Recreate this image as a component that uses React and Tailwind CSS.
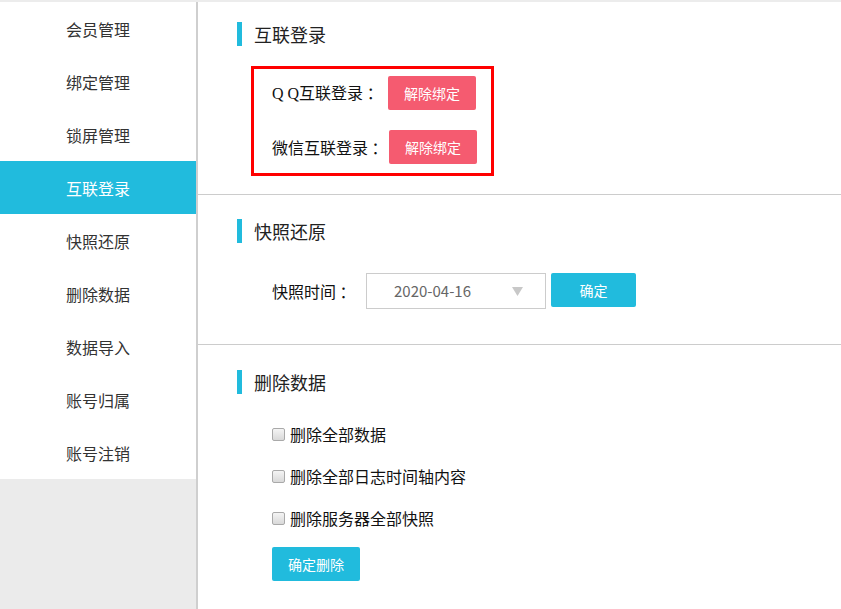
import React from 'react'

const menu = ['会员管理', '绑定管理', '锁屏管理', '互联登录', '快照还原', '删除数据', '数据导入', '账号归属', '账号注销']
const cjk = { fontFamily: '"Noto Sans CJK SC", "Noto Sans", sans-serif' }

function Title({ text }) {
  return (
    <div className="flex items-center h-[24px] ml-[39px]">
      <span className="w-[5px] h-[24px] bg-[#21bbdd]" />
      <span className="ml-[12px] text-[18px] leading-none text-[#222]">{text}</span>
    </div>
  )
}

function Checkbox({ label }) {
  return (
    <label className="flex items-center h-[42px]">
      <span className="w-[13px] h-[13px] rounded-[2px] border border-[#a9a9a9] bg-gradient-to-b from-[#f4f4f4] to-[#d9d9d9]" />
      <span className="ml-[5px] text-[16px] leading-none text-[#111]">{label}</span>
    </label>
  )
}

export default function App() {
  return (
    <div className="w-[841px] h-[609px] flex bg-white border-t-2 border-[#ececec] overflow-hidden" style={cjk}>
      {/* Sidebar */}
      <div className="w-[198px] shrink-0 flex flex-col bg-[#ebebeb] border-r-2 border-[#cfcfcf]">
        <div className="bg-white">
          {menu.map(item => (
            <div
              key={item}
              className={`h-[53px] flex items-center justify-center text-[16px] ${
                item === '互联登录' ? 'bg-[#21bbdd] text-white' : 'text-[#333]'
              }`}
            >
              {item}
            </div>
          ))}
        </div>
      </div>

      {/* Main */}
      <div className="flex-1 flex flex-col">
        {/* 互联登录 */}
        <div className="h-[193px] pt-[20px] border-b border-[#cccccc]">
          <Title text="互联登录" />
          <div className="mt-[20px] ml-[53px] w-[243px] h-[110px] border-[3px] border-[#ff0000] pt-[7px] pl-[18px] flex flex-col gap-[20px]">
            <div className="flex items-center">
              <span className="w-[116px] text-[16px] text-[#111]">
                <span style={{ fontFamily: '"Liberation Serif", serif' }}>Q Q</span>互联登录 ：
              </span>
              <button className="w-[88px] h-[34px] rounded-[2px] bg-[#f55b70] text-white text-[14px]">解除绑定</button>
            </div>
            <div className="flex items-center">
              <span className="w-[117px] text-[16px] text-[#111]">微信互联登录 ：</span>
              <button className="w-[88px] h-[34px] rounded-[2px] bg-[#f55b70] text-white text-[14px]">解除绑定</button>
            </div>
          </div>
        </div>

        {/* 快照还原 */}
        <div className="h-[150px] pt-[24px] border-b border-[#cccccc]">
          <Title text="快照还原" />
          <div className="mt-[30px] ml-[74px] flex items-start">
            <span className="w-[94px] h-[36px] flex items-center text-[16px] text-[#111]">快照时间 ：</span>
            <div className="w-[180px] h-[36px] border border-[#cccccc] flex items-center pl-[27px] pr-[22px] justify-between">
              <span className="text-[15px] text-[#666]">2020-04-16</span>
              <svg width="11" height="9" viewBox="0 0 11 9">
                <polygon points="0,0 11,0 5.5,9" fill="#c8c8c8" />
              </svg>
            </div>
            <button className="ml-[5px] w-[85px] h-[34px] rounded-[2px] bg-[#21bbdd] text-white text-[14px]">确定</button>
          </div>
        </div>

        {/* 删除数据 */}
        <div className="flex-1 pt-[25px]">
          <Title text="删除数据" />
          <div className="mt-[19px] ml-[74px] flex flex-col">
            <Checkbox label="删除全部数据" />
            <Checkbox label="删除全部日志时间轴内容" />
            <Checkbox label="删除服务器全部快照" />
            <button className="mt-[8px] w-[88px] h-[34px] rounded-[2px] bg-[#21bbdd] text-white text-[14px]">确定删除</button>
          </div>
        </div>
      </div>
    </div>
  )
}
